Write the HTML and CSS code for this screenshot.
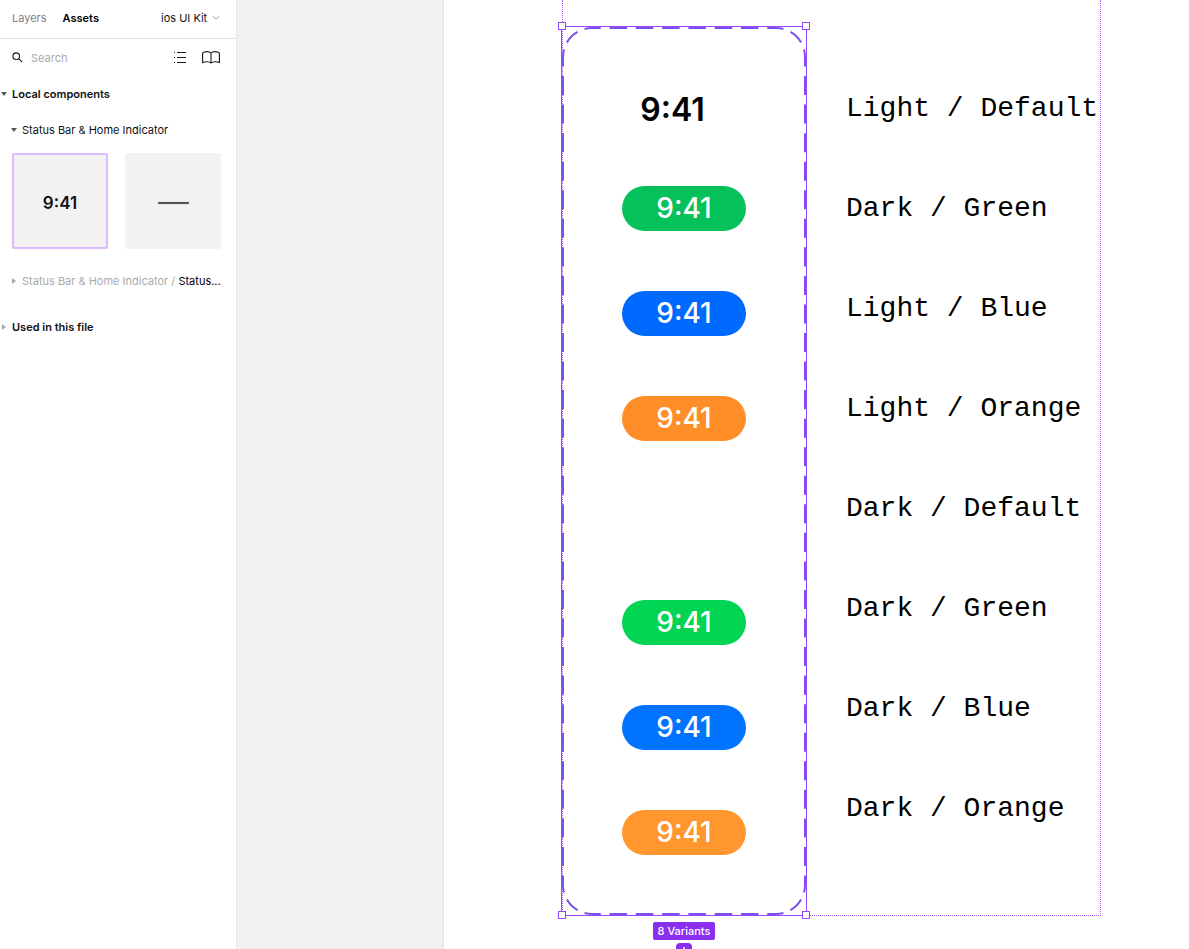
FILE: index.html
```html
<!DOCTYPE html>
<html lang="en">
<head>
  <meta charset="UTF-8">
  <meta name="viewport" content="width=device-width, initial-scale=1.0">
  <title>ios UI Kit</title>
  <link rel="stylesheet" href="styles.css">
</head>
<body>
  <aside class="sidebar">
    <header class="sidebar-header">
      <button class="tab">Layers</button>
      <button class="tab active">Assets</button>
      <div class="page-picker">
        <select aria-label="Page">
          <option>ios UI Kit</option>
        </select>
        <svg width="8" height="6" viewBox="0 0 8 6" fill="none" stroke="#a0a0a0"><path d="M1 1.2l3 3 3-3"/></svg>
      </div>
    </header>

    <div class="search-row">
      <svg width="11" height="11" viewBox="0 0 12 12" fill="none" stroke="#1a1a1a" stroke-width="1.2"><circle cx="4.6" cy="4.6" r="3.6"/><path d="M7.3 7.3l3.8 3.8"/></svg>
      <input class="search" type="text" placeholder="Search" aria-label="Search">
      <button class="icon-button" aria-label="Show as list">
        <svg width="14" height="12" viewBox="0 0 14 12" fill="#1a1a1a"><path d="M1 0h1v1H1zM4 0h9v1H4zM1 5h1v1H1zM4 5h9v1H4zM1 10h1v1H1zM4 10h9v1H4z"/></svg>
      </button>
      <button class="icon-button" aria-label="Team library">
        <svg width="18" height="13" viewBox="0 0 18 13" fill="none" stroke="#1a1a1a" stroke-width="1.1"><path d="M9 12V2.300C8.200 1 6.800.6 5 .6S1.600 1 .6 2.200v9.400C2 10.800 3.400 10.700 5 10.700s3.200.2 4 1.300c.8-1.100 2.400-1.300 4-1.300s3 .1 4.400.9V2.200C16.400 1 14.800.6 13 .6S9.800 1 9 2.300"/></svg>
      </button>
    </div>

    <button class="group-title">
      <svg width="6" height="4" viewBox="0 0 6 4" fill="#555"><path d="M0 0h6L3 4z"/></svg>
      Local components
    </button>
    <button class="group-title nested">
      <svg width="6" height="4" viewBox="0 0 6 4" fill="#555"><path d="M0 0h6L3 4z"/></svg>
      Status Bar &amp; Home Indicator
    </button>

    <div class="cards">
      <button class="card selected">9:41</button>
      <button class="card" aria-label="Home Indicator"><span class="home-indicator"></span></button>
    </div>

    <button class="group-title nested closed">
      <svg width="4" height="6" viewBox="0 0 4 6" fill="#aaa"><path d="M0 0v6l4-3z"/></svg>
      <span class="path">Status Bar &amp; Home Indicator / <span class="leaf">Status...</span></span>
    </button>
    <button class="group-title closed">
      <svg width="4" height="6" viewBox="0 0 4 6" fill="#aaa"><path d="M0 0v6l4-3z"/></svg>
      Used in this file
    </button>
  </aside>

  <main class="canvas">
    <div class="artboard">
      <section class="frame">
        <div class="variants">
          <!-- each side and corner carries its own dash rhythm -->
          <svg class="dashes" viewBox="0 0 244 888" fill="none" stroke="#7a50f0" stroke-width="2" stroke-dasharray="2 1" stroke-dashoffset="1">
            <path pathLength="21" d="M30 1H214"/>
            <path pathLength="6" d="M214 1a29 29 0 0 1 29 29"/>
            <path pathLength="87" d="M243 30V858"/>
            <path pathLength="6" d="M243 858a29 29 0 0 1-29 29"/>
            <path pathLength="21" d="M214 887H30"/>
            <path pathLength="6" d="M30 887a29 29 0 0 1-29-29"/>
            <path pathLength="87" d="M1 858V30"/>
            <path pathLength="6" d="M1 30a29 29 0 0 1 29-29"/>
          </svg>

          <div class="time plain">9:41</div>
          <div class="time green">9:41</div>
          <div class="time blue">9:41</div>
          <div class="time orange">9:41</div>
          <div class="time plain"></div>
          <div class="time dark-green">9:41</div>
          <div class="time dark-blue">9:41</div>
          <div class="time dark-orange">9:41</div>

          <span class="handle top left"></span>
          <span class="handle top right"></span>
          <span class="handle bottom left"></span>
          <span class="handle bottom right"></span>

          <div class="selection-info">
            <span class="badge">8 Variants</span>
            <button class="add" aria-label="Add variant">
              <svg width="8" height="8" viewBox="0 0 8 8" stroke="#fff" stroke-width="1.5"><path d="M4 0v8M0 4h8"/></svg>
            </button>
          </div>
        </div>

        <ul class="labels">
          <li>Light / Default</li>
          <li>Dark / Green</li>
          <li>Light / Blue</li>
          <li>Light / Orange</li>
          <li>Dark / Default</li>
          <li>Dark / Green</li>
          <li>Dark / Blue</li>
          <li>Dark / Orange</li>
        </ul>
      </section>
    </div>
  </main>
</body>
</html>
```
FILE: styles.css
```css
* {
  box-sizing: border-box;
}
body {
  margin: 0;
  height: 100vh;
  display: flex;
  overflow: hidden;
  font-family: Inter, "Liberation Sans", sans-serif;
  font-size: 11px;
  line-height: 16px;
  color: #111;
  background-color: #f2f2f2;
}
button, input, select {
  font: inherit;
  color: inherit;
  background: none;
  border: none;
  padding: 0;
  margin: 0;
}
button {
  cursor: pointer;
}
svg {
  display: block;
  flex-shrink: 0;
}

/* sidebar */
.sidebar {
  flex: 0 0 237px;
  min-width: 0;
  background-color: #fff;
  border-right: 1px solid #e5e5e5;
}
.sidebar-header {
  display: flex;
  align-items: center;
  gap: 16px;
  height: 39px;
  padding: 0 16px 2px 12px;
  border-bottom: 1px solid #e0e0e0;
}
.tab {
  color: #808080;
}
.tab.active {
  color: #000;
  font-weight: 600;
}
.page-picker {
  display: flex;
  align-items: center;
  gap: 4px;
  margin-left: auto;
}
.page-picker select {
  appearance: none;
}
.search-row {
  display: flex;
  align-items: center;
  height: 37px;
  gap: 8px;
  padding: 0 16px 0 12px;
}
.search {
  flex: 1;
  width: 0;
  min-width: 0;
  outline: none;
}
.search::placeholder {
  color: #aaa;
}
.icon-button {
  margin-left: 7px;
}
.group-title {
  display: flex;
  align-items: center;
  gap: 5px;
  width: 100%;
  height: 36px;
  padding-left: 1px;
  font-weight: 600;
  text-align: left;
  white-space: nowrap;
}
.group-title.nested {
  padding-left: 11px;
  font-weight: 400;
}
.group-title.closed {
  gap: 6px;
  padding-left: 2px;
  margin-top: 10px;
}
.group-title.nested.closed {
  padding-left: 12px;
  margin-top: 0;
}
.path {
  color: #aaa;
}
.leaf {
  color: #000;
}
.cards {
  display: flex;
  justify-content: space-between;
  padding: 5px 15px 14px 12px;
}
.card {
  display: flex;
  align-items: center;
  justify-content: center;
  width: 96px;
  height: 96px;
  padding-top: 3px;
  border-radius: 2px;
  background-color: #f2f2f2;
  font-size: 17px;
  font-weight: 600;
}
.card.selected {
  border: 2px solid #dcbcfc;
}
.home-indicator {
  width: 31px;
  height: 2px;
  border-radius: 1px;
  background-color: #555;
  box-shadow: 0 0 1px #777;
}

/* canvas */
.canvas {
  flex: 1;
  display: flex;
  min-width: 0;
  padding-left: 205px;
}
.artboard {
  flex: 1;
  background-color: #fff;
  border-left: 2px solid #e9e9e9;
  padding-left: 118px;
}
.frame {
  display: flex;
  align-items: flex-start;
  gap: 39px;
  width: fit-content;
  padding: 26px 2px 0 0;
  border: 1px dotted #ad5cff;
  border-top: none;
}
.variants {
  position: relative;
  display: flex;
  flex-direction: column;
  gap: 60px;
  width: 246px;
  margin: 0 0 -1px -2px;
  padding: 60px;
  border: 1px solid #9747ff;
}
.dashes {
  position: absolute;
  inset: 0;
  width: 100%;
  height: 100%;
}
.time {
  height: 45px;
  border-radius: 23px;
  color: #fff;
  font-size: 28px;
  font-weight: 500;
  line-height: 45px;
  text-align: center;
}
.time.plain {
  width: 101px;
  height: 39px;
  color: #000;
  font-size: 32px;
  font-weight: 600;
}
.green {
  background-color: #04c15b;
}
.blue {
  background-color: #0069fe;
}
.orange {
  background-color: #ff8d28;
}
.dark-green {
  background-color: #02d453;
}
.dark-blue {
  background-color: #0074ff;
}
.dark-orange {
  background-color: #ff962e;
}
.handle {
  position: absolute;
  width: 8px;
  height: 8px;
  border: 1px solid #9747ff;
  background-color: #fff;
}
.handle.top {
  top: -5px;
}
.handle.bottom {
  bottom: -4px;
}
.handle.left {
  left: -4px;
}
.handle.right {
  right: -4px;
}
.selection-info {
  position: absolute;
  top: 100%;
  left: 0;
  right: 0;
  display: flex;
  flex-direction: column;
  align-items: center;
  gap: 3px;
  padding-top: 7px;
}
.badge {
  padding: 1px 5px;
  border-radius: 2px;
  background-color: #8a2ef0;
  color: #fff;
  font-weight: 500;
}
.add {
  display: flex;
  align-items: center;
  justify-content: center;
  width: 16px;
  height: 16px;
  border-radius: 4px;
  background-color: #8a2ef0;
}
.labels {
  display: flex;
  flex-direction: column;
  gap: 60px;
  margin: 0;
  padding: 63px 0 0;
  list-style: none;
  color: #000;
  font-family: "Liberation Mono", monospace;
  font-size: 28px;
  line-height: 40px;
  white-space: nowrap;
}
```
